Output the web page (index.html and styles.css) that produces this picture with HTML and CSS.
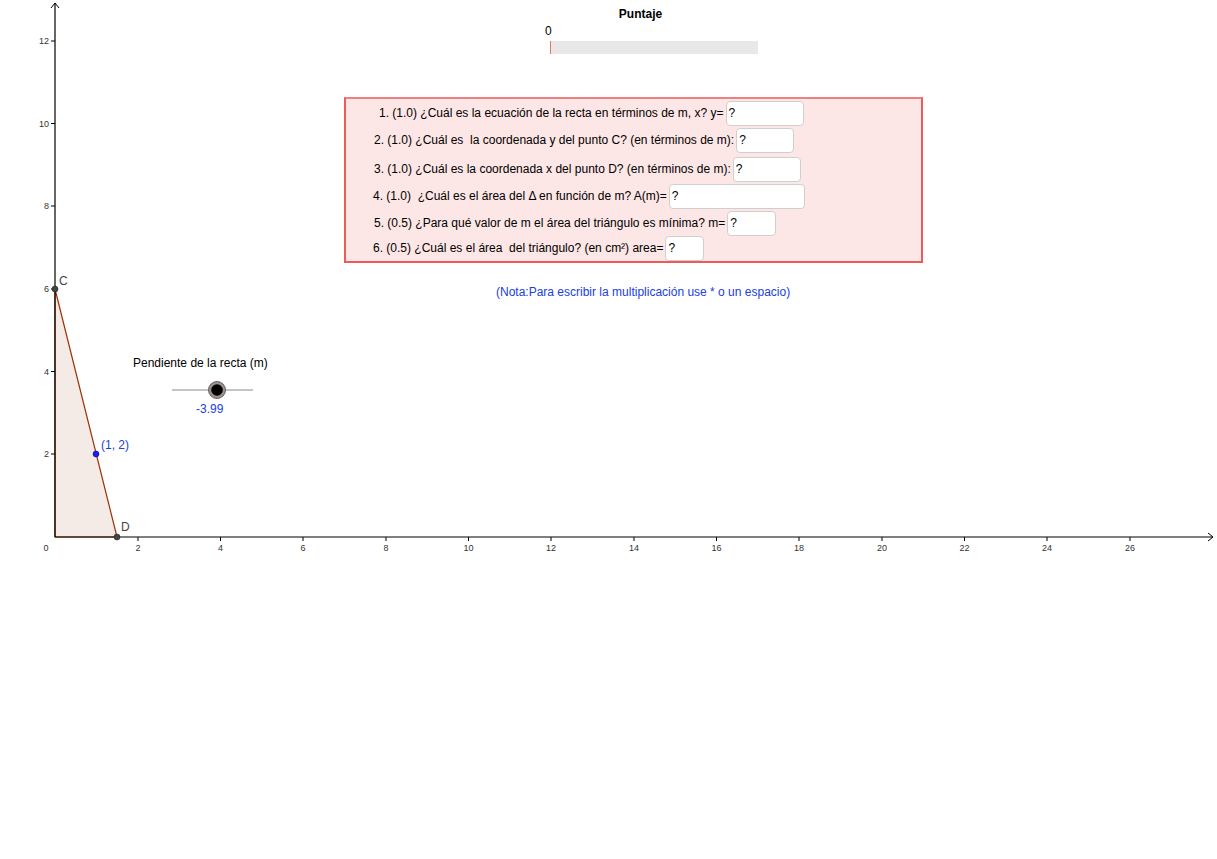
FILE: index.html
```html
<!DOCTYPE html>
<html lang="es">
<head>
<meta charset="utf-8">
<title>Pendiente de la recta</title>
<link rel="stylesheet" href="styles.css">
</head>
<body>
<div class="canvas">
  <svg class="graph" width="1217" height="859" viewBox="0 0 1217 859" xmlns="http://www.w3.org/2000/svg">
    <!-- triangle -->
    <polygon points="55,289 117,537 55,537" fill="#f4eae6" stroke="#993300" stroke-width="1.2"/>
    <!-- axes -->
    <line x1="55" y1="537" x2="1213" y2="537" stroke="#000" stroke-width="1.2"/>
    <polyline points="1208,533 1213,537 1208,541" fill="none" stroke="#000" stroke-width="1"/>
    <line x1="55" y1="537" x2="55" y2="3" stroke="#000" stroke-width="1.2"/>
    <polyline points="51,8 55,3 59,8" fill="none" stroke="#000" stroke-width="1"/>
    <g stroke="#000" stroke-width="1">
      <line x1="138" y1="537" x2="138" y2="541"/>
      <line x1="220.5" y1="537" x2="220.5" y2="541"/>
      <line x1="303" y1="537" x2="303" y2="541"/>
      <line x1="386" y1="537" x2="386" y2="541"/>
      <line x1="468.5" y1="537" x2="468.5" y2="541"/>
      <line x1="551" y1="537" x2="551" y2="541"/>
      <line x1="634" y1="537" x2="634" y2="541"/>
      <line x1="716.5" y1="537" x2="716.5" y2="541"/>
      <line x1="799" y1="537" x2="799" y2="541"/>
      <line x1="882" y1="537" x2="882" y2="541"/>
      <line x1="964.5" y1="537" x2="964.5" y2="541"/>
      <line x1="1047" y1="537" x2="1047" y2="541"/>
      <line x1="1130" y1="537" x2="1130" y2="541"/>
      <line x1="51" y1="454" x2="55" y2="454"/>
      <line x1="51" y1="371.5" x2="55" y2="371.5"/>
      <line x1="51" y1="289" x2="55" y2="289"/>
      <line x1="51" y1="206" x2="55" y2="206"/>
      <line x1="51" y1="123.5" x2="55" y2="123.5"/>
      <line x1="51" y1="41" x2="55" y2="41"/>
    </g>
    <g class="ticklabel" text-anchor="middle">
      <text x="46" y="551">0</text>
      <text x="138" y="551">2</text>
      <text x="220.5" y="551">4</text>
      <text x="303" y="551">6</text>
      <text x="386" y="551">8</text>
      <text x="468.5" y="551">10</text>
      <text x="551" y="551">12</text>
      <text x="634" y="551">14</text>
      <text x="716.5" y="551">16</text>
      <text x="799" y="551">18</text>
      <text x="882" y="551">20</text>
      <text x="964.5" y="551">22</text>
      <text x="1047" y="551">24</text>
      <text x="1130" y="551">26</text>
    </g>
    <g class="ticklabel" text-anchor="end">
      <text x="49" y="457">2</text>
      <text x="49" y="374.5">4</text>
      <text x="49" y="292">6</text>
      <text x="49" y="209">8</text>
      <text x="49" y="126.5">10</text>
      <text x="49" y="44">12</text>
    </g>
    <!-- points -->
    <circle cx="55" cy="289" r="3" fill="#444" stroke="#222" stroke-width="0.6"/>
    <circle cx="117" cy="537" r="3" fill="#444" stroke="#222" stroke-width="0.6"/>
    <circle cx="96" cy="454" r="3" fill="#1c1cf0" stroke="#0a0a90" stroke-width="0.6"/>
    <text class="ptlabel" x="59" y="285">C</text>
    <text class="ptlabel" x="121" y="531">D</text>
    <text class="ptlabel blue" x="101" y="449">(1, 2)</text>
    <!-- slider -->
    <line x1="172" y1="390" x2="253" y2="390" stroke="#888" stroke-width="1"/>
    <circle cx="217" cy="390" r="8.5" fill="#9a9090" stroke="#6a6060" stroke-width="1"/>
    <circle cx="217" cy="390" r="5.8" fill="#000"/>
  </svg>

  <div class="score">
    <div class="score-title">Puntaje</div>
    <div class="score-value">0</div>
    <div class="score-bar"><span class="score-fill"></span></div>
  </div>

  <div class="slider-label">Pendiente de la recta (m)</div>
  <div class="slider-value">-3.99</div>

  <div class="quiz">
    <div class="row r1"><span>1. (1.0) ¿Cuál es la ecuación de la recta en términos de m, x? y=</span><span class="input w1">?</span></div>
    <div class="row r2"><span>2. (1.0) ¿Cuál es&nbsp; la coordenada y del punto C? (en términos de m):</span><span class="input w2">?</span></div>
    <div class="row r3"><span>3. (1.0) ¿Cuál es la coordenada x del punto D? (en términos de m):</span><span class="input w3">?</span></div>
    <div class="row r4"><span>4. (1.0)&nbsp; ¿Cuál es el área del Δ en función de m? A(m)=</span><span class="input w4">?</span></div>
    <div class="row r5"><span>5. (0.5) ¿Para qué valor de m el área del triángulo es mínima? m=</span><span class="input w5">?</span></div>
    <div class="row r6"><span>6. (0.5) ¿Cuál es el área&nbsp; del triángulo? (en cm²) area=</span><span class="input w6">?</span></div>
  </div>

  <div class="note">(Nota:Para escribir la multiplicación use * o un espacio)</div>
</div>
</body>
</html>
```

FILE: styles.css
```css
html, body {
  margin: 0;
  padding: 0;
  background: #fff;
}

body {
  font-family: "Liberation Sans", Arial, sans-serif;
  font-size: 12px;
  color: #000;
}

.canvas {
  position: relative;
  width: 1217px;
  height: 859px;
  overflow: hidden;
}

.graph {
  position: absolute;
  left: 0;
  top: 0;
}

.ticklabel text {
  font-family: "Liberation Sans", Arial, sans-serif;
  font-size: 9px;
  fill: #333;
}

.ptlabel {
  font-family: "Liberation Sans", Arial, sans-serif;
  font-size: 12px;
  fill: #444;
}

.ptlabel.blue {
  fill: #2040e0;
}

.score {
  position: absolute;
  left: 540px;
  top: 6px;
  width: 220px;
}

.score-title {
  width: 201px;
  font-weight: bold;
  font-size: 12px;
  line-height: 16px;
  text-align: center;
}

.score-value {
  line-height: 13px;
  margin-top: 3px;
  padding-left: 5px;
}

.score-bar {
  margin-top: 3px;
  margin-left: 10px;
  width: 208px;
  height: 13px;
  background: #e8e8e8;
}

.score-fill {
  display: block;
  width: 1px;
  height: 13px;
  background: #f07070;
}

.slider-label {
  position: absolute;
  left: 133px;
  top: 356px;
  line-height: 14px;
}

.slider-value {
  position: absolute;
  left: 196px;
  top: 402px;
  line-height: 14px;
  color: #2040e0;
}

.quiz {
  position: absolute;
  left: 344px;
  top: 97px;
  width: 579px;
  height: 166px;
  box-sizing: border-box;
  border: 2px solid #ee5a5a;
  border-top-color: #f08080;
  background: #fde6e6;
  padding-top: 2px;
  display: flex;
  flex-direction: column;
  overflow: hidden;
}

.row {
  display: flex;
  align-items: flex-start;
  gap: 2px;
  white-space: nowrap;
}

.row > span:first-child {
  line-height: 25px;
}

.r1 { height: 27px; margin-left: 33px; }
.r2 { height: 30px; margin-left: 28px; }
.r3 { height: 27px; margin-left: 28px; }
.r4 { height: 28px; margin-left: 27px; }
.r5 { height: 25px; margin-left: 28px; }
.r6 { height: 25px; margin-left: 27px; }

.input {
  display: block;
  height: 25px;
  box-sizing: border-box;
  background: #fff;
  border: 1px solid #cfcfcf;
  border-radius: 4px;
  padding-left: 2px;
  line-height: 23px;
}

.w1 { width: 78px; }
.w2 { width: 58px; }
.w3 { width: 68px; }
.w4 { width: 136px; }
.w5 { width: 49px; }
.w6 { width: 39px; }

.note {
  position: absolute;
  left: 496px;
  top: 285px;
  line-height: 14px;
  color: #2040e0;
}
```
